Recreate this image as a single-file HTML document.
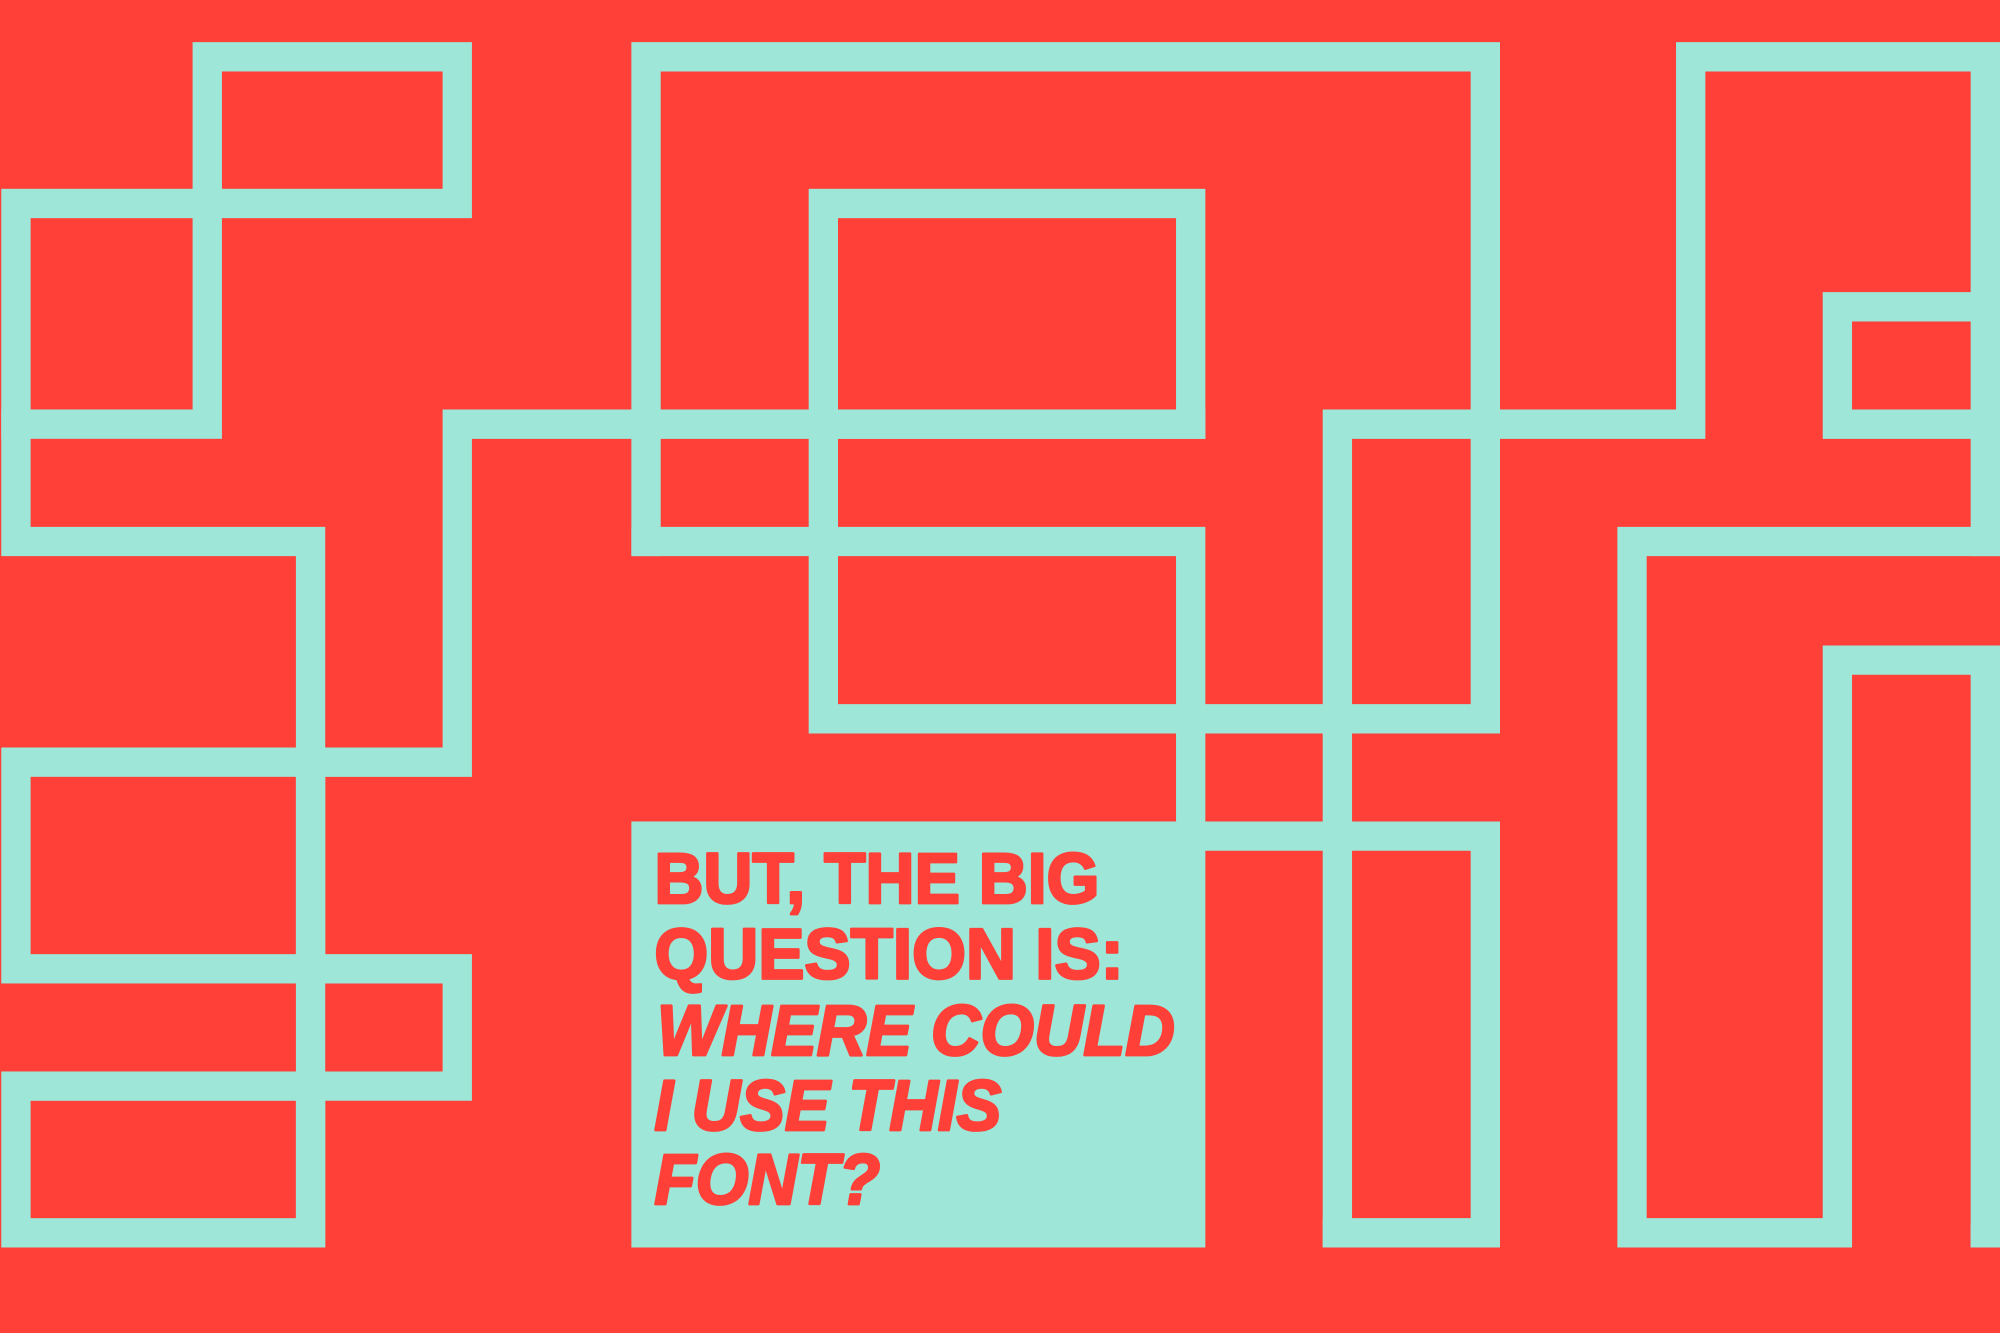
<!DOCTYPE html>
<html><head><meta charset="utf-8"><style>
html,body{margin:0;padding:0;background:#ff4038;}
svg{display:block;}
</style></head><body>
<svg width="2000" height="1333" viewBox="0 0 1568 1045" xmlns="http://www.w3.org/2000/svg">
<rect width="1568" height="1045" fill="#ff4038"/>
<g fill="none" stroke="#9de6d8" stroke-width="23" stroke-linecap="square">
<rect x="162.5" y="44.5" width="196" height="115"/>
<rect x="12.5" y="159.5" width="150" height="173"/>
<polyline points="12.5,332.5 12.5,424.5 243.5,424.5 243.5,966.5"/>
<rect x="12.5" y="851.5" width="231" height="115"/>
<rect x="12.5" y="597.5" width="231" height="162"/>
<polyline points="243.5,597.5 358.5,597.5 358.5,332.5 933.5,332.5"/>
<polyline points="243.5,759.5 358.5,759.5 358.5,851.5 243.5,851.5"/>
<polyline points="506.5,424.5 506.5,44.5 1164.5,44.5 1164.5,563.5"/>
<polyline points="506.5,424.5 933.5,424.5 933.5,655.5"/>
<rect x="645.5" y="159.5" width="288" height="173"/>
<polyline points="645.5,332.5 645.5,563.5 1164.5,563.5"/>
<polyline points="1048.5,966.5 1048.5,332.5 1325.5,332.5 1325.5,44.5 1556.5,44.5 1556.5,424.5"/>
<polyline points="1556.5,240.5 1440.5,240.5 1440.5,332.5 1556.5,332.5"/>
<polyline points="933.5,655.5 1164.5,655.5 1164.5,966.5 1048.5,966.5"/>
<polyline points="1568,424.5 1279.5,424.5 1279.5,966.5 1440.5,966.5 1440.5,517.5 1556.5,517.5 1556.5,966.5"/>
</g>
<rect x="1545" y="960" width="23" height="18" fill="#9de6d8"/>
<rect x="495" y="644" width="450" height="334" fill="#9de6d8"/>
<g fill="#ff4038" stroke="#ff4038" stroke-width="2.2" stroke-linejoin="round" font-family="Liberation Sans, sans-serif" font-weight="bold" font-size="56">
<text x="513" y="708" textLength="349" lengthAdjust="spacingAndGlyphs">BUT, THE BIG</text>
<text x="513" y="767" textLength="368" lengthAdjust="spacingAndGlyphs">QUESTION IS:</text>
<g font-style="italic">
<text x="515" y="827" textLength="406" lengthAdjust="spacingAndGlyphs">WHERE COULD</text>
<text x="513" y="886" textLength="272" lengthAdjust="spacingAndGlyphs">I USE THIS</text>
<text x="513" y="944" textLength="177" lengthAdjust="spacingAndGlyphs">FONT?</text>
</g>
</g>
</svg>
</body></html>
